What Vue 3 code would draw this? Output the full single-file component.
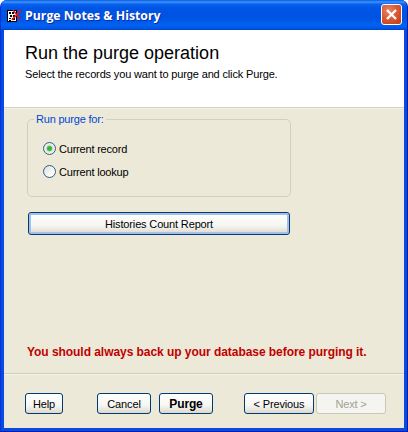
<template>
  <div class="window">
    <header class="titlebar">
      <svg class="titlebar__icon" width="16" height="16" viewBox="0 0 16 16">
        <rect x="0.5" y="3.5" width="9" height="11" fill="#fff" stroke="#000" />
        <path d="M2 5h2v2H2zM5 5h2v2H5zM3 8h2v2H3zM6 8h2v2H6zM2 11h2v1H2zM5 11h3v2H5zM2 13h2v1H2z" fill="#000" />
        <path d="M5 13L14 3M6 3l7 9" stroke="#f01010" stroke-width="1.4" fill="none" />
      </svg>
      <span class="titlebar__text">Purge Notes &amp; History</span>
      <button class="titlebar__close" type="button" aria-label="Close">
        <svg width="13" height="13" viewBox="0 0 13 13">
          <path d="M2 2l9 9M11 2l-9 9" stroke="#fff" stroke-width="2.4" fill="none" />
        </svg>
      </button>
    </header>

    <div class="client">
      <section class="intro">
        <h1 class="intro__title">Run the purge operation</h1>
        <p class="intro__text">Select the records you want to purge and click Purge.</p>
      </section>

      <main class="body">
        <fieldset class="group">
          <legend class="group__legend">Run purge for:</legend>
          <label v-for="opt in options" :key="opt" class="radio">
            <span class="radio__dot" :class="{ 'radio__dot--on': opt === selected }"></span>
            <span>{{ opt }}</span>
          </label>
        </fieldset>

        <button class="btn btn--wide" type="button">Histories Count Report</button>

        <p class="warning">You should always back up your database before purging it.</p>
      </main>

      <footer class="footer">
        <button class="btn btn--help" type="button">Help</button>
        <button class="btn btn--mid" type="button">Cancel</button>
        <button class="btn btn--mid btn--bold" type="button">Purge</button>
        <button class="btn btn--nav btn--prev" type="button">&lt; Previous</button>
        <button class="btn btn--nav btn--off" type="button" disabled>Next &gt;</button>
      </footer>
    </div>
  </div>
</template>

<script setup>
const options = ["Current record", "Current lookup"];
const selected = "Current record";
</script>

<style>
html,
body {
  margin: 0;
  background: #fff;
}
</style>

<style scoped>
.window {
  width: 408px;
  height: 432px;
  box-sizing: border-box;
  display: flex;
  flex-direction: column;
  border-radius: 7px 7px 0 0;
  padding: 0 3px 3px;
  border-left: 1px solid #0831d9;
  border-right: 1px solid #001ea0;
  border-bottom: 1px solid #001ea0;
  font-family: "Liberation Sans", Arial, sans-serif;
  font-size: 11px;
  letter-spacing: -0.2px;
  color: #000;
  overflow: hidden;
  background: #0a4ae4;
}

.titlebar {
  flex: 0 0 30px;
  margin: 0 -4px;
  padding: 0 6px 0 7px;
  display: flex;
  align-items: center;
  background: linear-gradient(
    180deg,
    #0a5ae0 0,
    #3d95ff 2px,
    #0a62ee 4px,
    #0055e6 8px,
    #0053e1 18px,
    #0062f2 25px,
    #0058e8 28px,
    #0040c8 30px
  );
}

.titlebar__icon {
  margin-top: -1px;
}

.titlebar__text {
  flex: 1;
  padding-left: 2px;
  color: #fff;
  font: bold 12.3px "Open Sans", "Liberation Sans", sans-serif;
  letter-spacing: 0;
  text-shadow: 1px 1px 0 #0f2f9e;
}

.titlebar__close {
  width: 21px;
  height: 21px;
  margin-top: -2px;
  padding: 0;
  box-sizing: border-box;
  display: flex;
  align-items: center;
  justify-content: center;
  border: 1px solid #fff;
  border-radius: 3px;
  background: radial-gradient(circle at 35% 30%, #e8856a 0, #db5a36 45%, #c23a14 100%);
}

.client {
  flex: 1;
  display: flex;
  flex-direction: column;
  background: #ece9d8;
  min-height: 0;
}

.intro {
  flex: 0 0 78px;
  box-sizing: border-box;
  padding: 13px 0 0 21px;
  background: #fff;
  border-bottom: 1px solid #d8d5c4;
}

.intro__title {
  margin: 0;
  font: 400 18px/20px "Liberation Sans", sans-serif;
  letter-spacing: 0;
}

.intro__text {
  margin: 4px 0 0;
  line-height: 15px;
  font-size: 11px;
  letter-spacing: -0.15px;
}

.body {
  flex: 1;
  display: flex;
  flex-direction: column;
  align-items: flex-start;
  padding: 4px 0 0 23px;
  box-shadow: inset 0 1px 0 #f2f0e6;
}

.group {
  width: 264px;
  height: 85px;
  box-sizing: border-box;
  margin: 0;
  padding: 11px 0 0 15px;
  border: 1px solid #d0d0bf;
  border-radius: 5px;
}

.group__legend {
  padding: 0 2px;
  margin-left: -9px;
  color: #0046d5;
  font-size: 11px;
  line-height: 14px;
}

.radio {
  height: 23px;
  display: flex;
  align-items: center;
  gap: 3px;
}

.radio__dot {
  width: 13px;
  height: 13px;
  box-sizing: border-box;
  border: 1px solid #2f5d8c;
  border-radius: 50%;
  background: linear-gradient(135deg, #dcdcd6, #fff 80%);
}

.radio__dot--on {
  background: radial-gradient(circle, #28b028 0, #4ac44a 2.5px, #e4e4de 3.2px, #fff 100%);
}

.btn {
  height: 21px;
  box-sizing: border-box;
  padding: 0;
  border: 1px solid #003c74;
  border-radius: 3px;
  background: linear-gradient(180deg, #fff 0, #f6f6f2 60%, #dcd8cc 100%);
  font: 11px "Liberation Sans", sans-serif;
  letter-spacing: -0.15px;
  color: #000;
}

.btn--wide {
  width: 262px;
  height: 23px;
  margin: 15px 0 0 1px;
  box-shadow: inset 0 0 0 2px #a6bfe8;
}

.warning {
  margin: auto 0 14px 0;
  color: #c00000;
  font: bold 12px/14px "Liberation Sans", sans-serif;
  letter-spacing: -0.05px;
}

.footer {
  flex: 0 0 55px;
  box-sizing: border-box;
  display: flex;
  align-items: flex-start;
  padding: 19px 0 0 21px;
  border-top: 1px solid #d0cdbc;
  box-shadow: inset 0 1px 0 #f5f3ea;
}

.btn--help {
  width: 38px;
}

.btn--mid {
  width: 54px;
  margin-left: 8px;
}

.btn--help + .btn--mid {
  margin-left: 34px;
}

.btn--bold {
  font-weight: 700;
  font-size: 12px;
}

.btn--nav {
  width: 70px;
}

.btn--prev {
  margin-left: 31px;
}

.btn--off {
  margin-left: 2px;
  border-color: #c9c7ba;
  background: #f4f4f0;
  color: #a1a192;
}
</style>
